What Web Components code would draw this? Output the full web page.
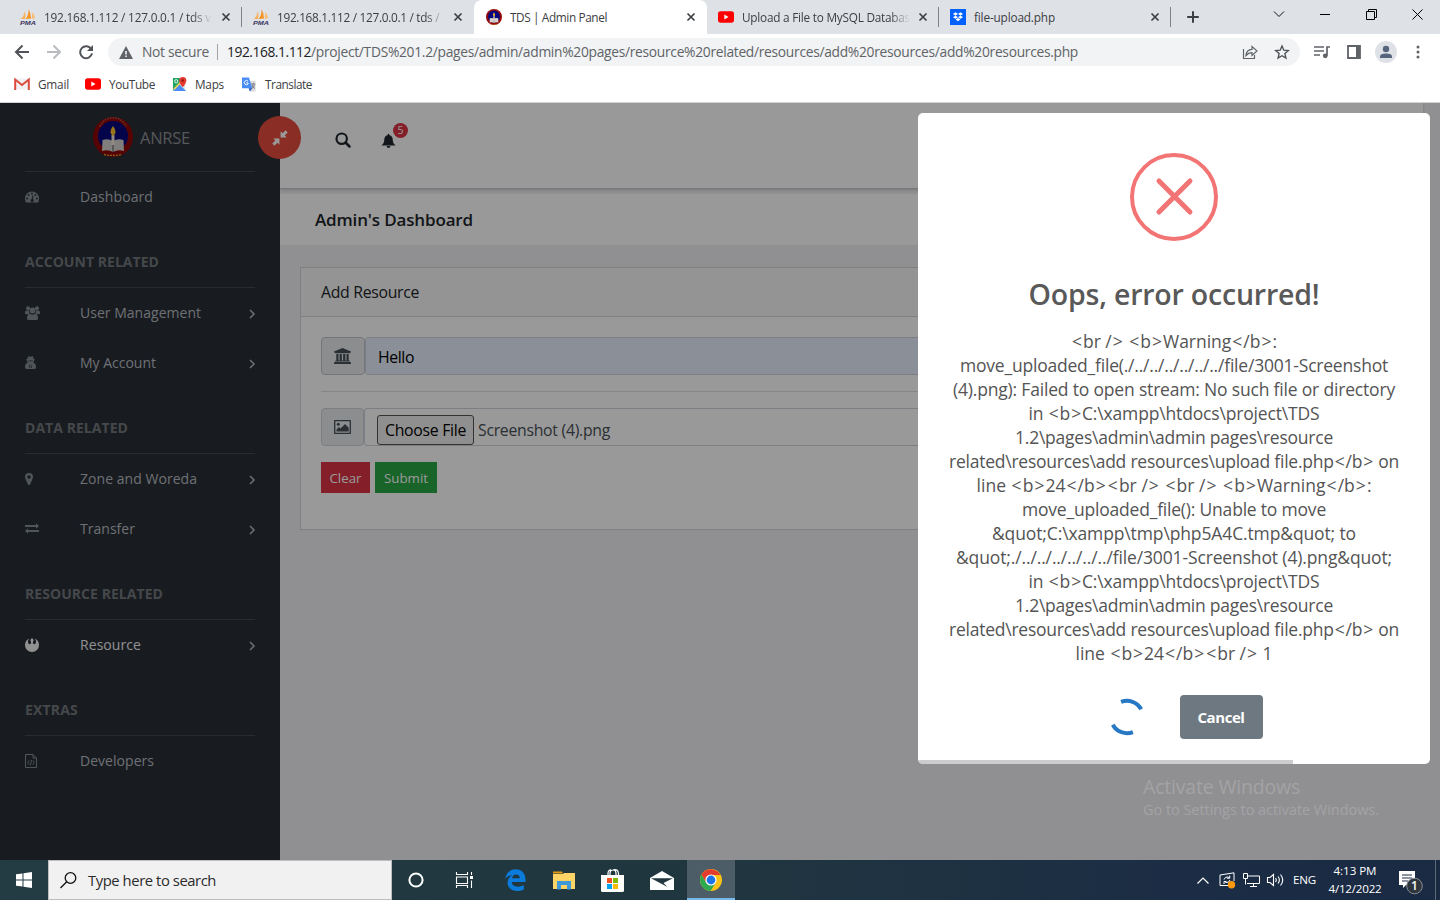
<!DOCTYPE html>
<html lang="en">
<head>
<meta charset="utf-8">
<title>TDS | Admin Panel</title>
<style>
html,body{margin:0;height:100%;overflow:hidden}
body{font-family:"Open Sans","Noto Sans",sans-serif;color:#000}
</style>
</head>
<body>
<desktop-screen></desktop-screen>
<script>
const ICONS = {
  pma:['0 0 16 16','<path d="M1 10Q4 7 5 2Q6 6 5 10Z" fill="#f9b25c"/><path d="M5.500 10Q9 6 8.500 0Q11 4 11 9.500Z" fill="#f79320"/><path d="M11.500 9.500Q13 6 12 3Q15 6 15 9.500Z" fill="#fbb96a"/><text x="0" y="15.500" font-family="Liberation Sans" font-size="6" font-weight="700" font-style="italic" textLength="16" lengthAdjust="spacingAndGlyphs" fill="#3b3560">PMA</text>'],
  crest:['0 0 40 40','<circle cx="20" cy="20" r="20" fill="#8f0508"/><circle cx="20" cy="19" r="15" fill="#07077d"/><path d="M7 14A14 14 0 0 1 33 14" fill="none" stroke="#d0a080" stroke-width="1.600" stroke-dasharray="1.500 1.200" opacity=".55" transform="translate(0 -4.500)"/><path d="M9.500 23Q15 21 20 24Q25 21 30.500 23L31 34Q25 32 20 35Q15 32 9 34Z" fill="#d6d2cf"/><path d="M20 25V35" stroke="#555" stroke-width="1"/><path d="M18.500 18h3v10h-3z" fill="#f2e7d9"/><path d="M20 9q5 6.500 0 10q-5-3.500 0-10Z" fill="#ffc52a"/><path d="M11 37.500q9 2 18 0" stroke="#d3a92a" stroke-width="1.300" stroke-dasharray="2 1" fill="none"/>'],
  youtube:['0 0 16 12','<rect width="16" height="11.500" y=".2" rx="2.600" fill="#f00"/><path d="M6.300 3.500v5l4.200-2.500z" fill="#fff"/>'],
  dropbox:['0 0 16 16','<path d="M0 0h16v16H0z" fill="#0061fe"/><path d="M5.500 3.200 8 4.900 5.500 6.500 3 4.900zM10.500 3.200 13 4.900l-2.500 1.600L8 4.900zM5.500 6.500 8 8.200 5.500 9.800 3 8.200zM10.500 6.500 13 8.200l-2.500 1.600L8 8.200zM8 9l2.400 1.600L8 12.300l-2.400-1.700z" fill="#fff"/>'],
  x:['0 0 10 10','<path d="M1.500 1.500l7 7M8.500 1.500l-7 7" stroke="#3c4043" stroke-width="1.700"/>'],
  plus:['0 0 12 12','<path d="M6 .2v11.600M.2 6h11.600" stroke="#3c4043" stroke-width="2"/>'],
  chev:['0 0 12 8','<path d="M1 1.500l5 5 5-5" fill="none" stroke="#111" stroke-width="1"/>'],
  min:['0 0 10 10','<path d="M0 5.500h10" stroke="#000"/>'],
  restore:['0 0 11 11','<path d="M2.500 2.500v-2h8v8h-2M.5 2.500h8v8h-8z" fill="none" stroke="#000"/>'],
  close:['0 0 11 11','<path d="M.5.500l10 10M10.500.500l-10 10" stroke="#000"/>'],
  back:['0 0 16 16','<path d="M15 8H2M8.500 1.500 2 8l6.500 6.500" fill="none" stroke="#505357" stroke-width="2"/>'],
  fwd:['0 0 16 16','<path d="M1 8h13M7.500 1.500 14 8l-6.500 6.500" fill="none" stroke="#b9bbbe" stroke-width="2"/>'],
  reload:['0 0 16 16','<path d="M13.300 5.200A6 6 0 1 0 14 9.400" fill="none" stroke="#505357" stroke-width="2"/><path d="M15 1v6H9z" fill="#505357"/>'],
  warn:['0 0 14 13','<path d="M7 0l7 13H0z" fill="#5f6368"/><path d="M6.200 5h1.600v3.500H6.200zM6.200 9.500h1.600v1.600H6.200z" fill="#f1f3f4"/>'],
  share:['0 0 16 16','<path d="M1.500 5v9.500h11V11" fill="none" stroke="#5f6368" stroke-width="1.200"/><path d="M4 11.500Q4.500 5.500 10 5.300V2.500l5 4.500-5 4.500V8.600Q6.500 8.500 4 11.500Z" fill="none" stroke="#5f6368" stroke-width="1.200"/>'],
  star:['0 0 16 16','<path d="M8 2l1.800 4.200 4.500.4-3.400 3 1 4.400L8 11.700 4.100 14l1-4.400-3.400-3 4.500-.4z" fill="none" stroke="#505357" stroke-width="1.400"/>'],
  queue:['0 0 16 14','<path d="M0 2h10M0 6h10M0 10h6" stroke="#5f6368" stroke-width="1.700"/><path d="M13 10.500V2h3" fill="none" stroke="#5f6368" stroke-width="1.700"/><circle cx="11.300" cy="10.800" r="2.400" fill="#5f6368"/>'],
  panel:['0 0 14 14','<path d="M1 1h12v12H1z" fill="#fff" stroke="#5f6368" stroke-width="1.800"/><path d="M9 1h4v12H9z" fill="#5f6368"/>'],
  person:['0 0 22 22','<circle cx="11" cy="11" r="11" fill="#dee1e6"/><circle cx="11" cy="8" r="3.200" fill="#56647c"/><path d="M5 17v-1.500Q5 12.500 11 12.500t6 3V17z" fill="#56647c"/>'],
  dots:['0 0 4 14','<circle cx="2" cy="2" r="1.500" fill="#5f6368"/><circle cx="2" cy="7" r="1.500" fill="#5f6368"/><circle cx="2" cy="12" r="1.500" fill="#5f6368"/>'],
  gmail:['0 0 16 12','<path d="M1 .5h14v11H1z" fill="#f1f1f1"/><path d="M1.200 12V1.500L8 7l6.800-5.500V12" fill="none" stroke="#dc4a3d" stroke-width="2"/>'],
  maps:['0 0 16 16','<rect x="1" y="1" width="13" height="14" rx="1.500" fill="#e8e8e8"/><path d="M1 1h9v6L1 14z" fill="#23a566"/><path d="M1 15 8 8l7 7z" fill="#4a8cf5"/><path d="M2 13 9 6" stroke="#f8d054" stroke-width="1.600"/><circle cx="4.500" cy="4.500" r="1.700" fill="none" stroke="#fff" stroke-width=".9"/><path d="M11.500 0a3.800 3.800 0 0 1 3.800 3.900Q15 6.500 11.500 11 8 6.500 7.700 3.900A3.800 3.800 0 0 1 11.500 0Z" fill="#e5392f"/><circle cx="11.500" cy="3.700" r="1.300" fill="#8c1911"/>'],
  translate:['0 0 16 16','<path d="M6 4h9v11.500H9z" fill="#dadada"/><path d="M.5.500H8L11.500 12H.500z" fill="#4a8cf5"/><path d="M7.500 12h4L9 15.500z" fill="#2b59c0"/><path d="M7 4.500A2.300 2.300 0 1 0 7 7.500V6.300H5" fill="none" stroke="#fff"/><path d="M10.500 7.500h4M12.500 6.500v1M14 8q-.7 3-3 4.200M11.200 8.500q1 2.500 3 3.700" fill="none" stroke="#5f6368" stroke-width=".9"/>'],
  compress:['0 0 16 16','<path d="M8.600 1.200 10.600 3.200 13.600.3 15.700 2.400 12.700 5.400 14.700 7.400H8.600zM7.400 14.800 5.400 12.800 2.400 15.700.3 13.600l3-3L1.300 8.600H7.400z" fill="#fff"/>'],
  search:['0 0 16 16','<circle cx="6.700" cy="6.700" r="5.200" fill="none" stroke="#20272e" stroke-width="2.200"/><path d="M10.500 10.500l4 4" stroke="#20272e" stroke-width="2.500" stroke-linecap="round"/>'],
  bell:['0 0 16 16','<path d="M8 .3q.9 0 .9 1.200Q12.500 2.500 12.500 6.500q0 4.200 3 6.300H.500q3-2.100 3-6.300Q3.500 2.500 7.100 1.500 7.100.300 8 .3zM6 13.300h4q-.2 2.200-2 2.200t-2-2.200z" fill="#20272e"/>'],
  dash:['0 0 14 12','<path d="M7 .5a7 7 0 0 1 7 7q0 2-1 4H1q-1-2-1-4a7 7 0 0 1 7-7z" fill="#868e95"/><g fill="#2a2f36"><circle cx="2.200" cy="7.500" r=".9"/><circle cx="3.600" cy="4" r=".9"/><circle cx="7" cy="2.500" r=".9"/><circle cx="10.400" cy="4" r=".9"/><circle cx="11.800" cy="7.500" r=".9"/><path d="M7.600 4.200 8.500 4.400 7.900 8a1.600 1.600 0 1 1-1.200-.1z"/></g>'],
  users:['0 0 15 14','<g fill="#868e95"><circle cx="3" cy="2.300" r="2"/><circle cx="12" cy="2.300" r="2"/><circle cx="7.500" cy="4.500" r="2.900"/><path d="M0 8V6.500Q0 4.500 1.500 4.500H4Q4 7 5 7.500 3.500 7.500 3 8.300zM15 8V6.500q0-2-1.500-2H11Q11 7 10 7.500q1.500 0 2 .8zM2 12.500Q2 7.700 5 7.700q1.200 1 2.500 1T10 7.700q3 0 3 4.800Q13 14 11.500 14h-8Q2 14 2 12.500z"/></g>'],
  secret:['0 0 11 13','<path d="M2.300 3 3.100.2 5.500.7 7.900.2l.8 2.800 1.500.7-1.200.8Q9 6 8.200 6.800 11 7.500 11 11q0 2-1.500 2h-8Q0 13 0 11q0-3.500 2.800-4.200Q2 6 2 4.500L.8 3.700z" fill="#868e95"/><path d="M4.200 8.500 4.900 12M6.800 8.500 6.100 12M3.200 4.900h4.600" stroke="#2a2f36" stroke-width=".7"/>'],
  pin:['0 0 8 12','<path d="M4 0a4 4 0 0 1 4 4Q8 5.500 5 11.400q-1 1-2 0Q0 5.500 0 4a4 4 0 0 1 4-4zm0 2.200A1.800 1.800 0 1 0 4 5.800 1.800 1.800 0 0 0 4 2.200z" fill="#868e95"/>'],
  swap:['0 0 14 11','<path d="M0 2h11V.2L14 3l-3 2.700V4H0zM14 9H3v1.800L0 8l3-2.700V7h11z" fill="#868e95"/>'],
  rebel:['0 0 14 14','<path d="M4 .8Q2.300 3 3.200 5 4.300 7 5.900 5.800L6 3 5 2.200 7 0 9 2.200 8 3l.1 2.800Q9.700 7 10.800 5 11.700 3 10 .8 14 2.500 14 7A7 7 0 0 1 0 7Q0 2.500 4 .8z" fill="#f1f1f1"/>'],
  code:['0 0 12 14','<path d="M.5.500h7.500l3.500 3.500v9.500H.5zM8 .5V4h3.500" fill="none" stroke="#868e95"/><path d="M4.200 6.300 2.700 8.500l1.500 2.200M7.800 6.300l1.500 2.200-1.500 2.200M6.600 6 5.400 11" fill="none" stroke="#868e95" stroke-width=".9"/>'],
  right:['0 0 6 10','<path d="M1 1l4 4-4 4" fill="none" stroke="#b4b8bc" stroke-width="1.600"/>'],
  bank:['0 0 17 16','<path d="M8.500 0 17 3.500V4.600H15.900V5.200H1.100V4.600H0V3.500zM2.300 6h2.200v6.500h1.100V6h2.300v6.500H9.100V6h2.300v6.500h1.100V6h2.200v6.500h1v1H1.300v-1h1zM.6 14h15.800v.6H17V16H0V14.600h.6z" fill="#495057"/>'],
  image:['0 0 17 14','<path d="M.7.700h15.600v12.600H.7z" fill="none" stroke="#495057" stroke-width="1.300" stroke-linejoin="round"/><circle cx="4.300" cy="4.200" r="1.500" fill="#495057"/><path d="M2.500 11.500V9.500L5 7l1.500 1.500L11 4l3.700 3.700v3.800z" fill="#495057"/>'],
  error:['0 0 88 88','<circle cx="44" cy="44" r="42" fill="none" stroke="#f27474" stroke-width="4"/><path d="M29 28 60 59M60 28 29 59" stroke="#f27474" stroke-width="5" stroke-linecap="round"/>'],
  loader:['0 0 36 36','<path d="M12.100 2.900A16.200 16.200 0 0 1 32.200 10.300M23.900 33.100A16.200 16.200 0 0 1 3.800 25.700" fill="none" stroke="#2778c4" stroke-width="4"/>'],
  win:['0 0 16 16','<path d="M0 2.300 6.500 1.400V7.500H0zM7.500 1.300 16 0v7.500H7.500zM0 8.500h6.500v6.100L0 13.700zM7.500 8.500H16V16L7.500 14.700z" fill="#fff"/>'],
  find:['0 0 17 17','<circle cx="10.500" cy="6" r="5.300" fill="none" stroke="#111" stroke-width="1.300"/><path d="M6.700 9.700.5 16" stroke="#111" stroke-width="1.300"/>'],
  cortana:['0 0 16 16','<circle cx="8" cy="8" r="6.600" fill="none" stroke="#fff" stroke-width="2"/>'],
  task:['0 0 17 16','<path d="M.5 0v2.500h11V0M.5 5h11v6.500H.500zM.5 16v-2.500h11V16M15.500 0v3M15.500 8.500V16" fill="none" stroke="#fff" stroke-width="1.100"/><path d="M14 4h3v3h-3z" fill="#fff"/>'],
  edge:['0 0 21 22','<path d="M.3 10.200C1.200 3.500 5.500.2 10.700.2 17 .2 20.500 4.800 20.500 10.600v2.500H6.800c.1 3 2.600 4.600 6 4.600 2.300 0 4.200-.6 6-1.700v4.400c-2 1-4.200 1.500-6.800 1.500C6.300 21.900 2.600 18.500 2.600 13.700c0-3.100 1.700-5.900 4.500-7.400C4.300 6.300 2 7.500.3 10.200zM7 9.300h7.800c0-2.500-1.400-3.900-3.600-3.900S7.400 6.900 7 9.300z" fill="#0b7bdc"/>'],
  folder:['0 0 22 19','<path d="M0 .5h9l1 2H0z" fill="#e09b12"/><path d="M0 3h10l1-1h11v16H0z" fill="#ffd466"/><path d="M4 10h14v8.500h-4V14H8v4.500H4z" fill="#3f99d8"/>'],
  store:['0 0 23 23','<path d="M7 7V4.500q0-3.500 3-3.700M9 7V4q.2-3 3-3t3 3v3M12 1q5-1.500 5.500 3.500V7" fill="none" stroke="#fff" stroke-width="1.200"/><path d="M0 6h23v15.500Q23 23 21.500 23h-20Q0 23 0 21.500z" fill="#fff"/><path d="M6 9h5v5H6z" fill="#f25022"/><path d="M12 9h5v5h-5z" fill="#7fba00"/><path d="M6 15h5v5H6z" fill="#00a4ef"/><path d="M12 15h5v5h-5z" fill="#ffb900"/>'],
  mail:['0 0 24 19','<path d="M0 7 12 0l12 7v12H0z" fill="#fff"/><path d="M1 7.300H23L13.500 12 17.500 16z" fill="#21363f"/>'],
  chrome:['0 0 22 22','<circle cx="11" cy="11" r="11" fill="#fbc116"/><path d="M1.500 5.500A11 11 0 0 0 10.500 22L15.800 13.700 11 11 6.200 13.700z" fill="#2da94f"/><path d="M1.500 5.500 6.500 14 11 11V6h9.500A11 11 0 0 0 1.500 5.500z" fill="#e33b2e"/><circle cx="11" cy="11" r="5.600" fill="#fff"/><circle cx="11" cy="11" r="4.400" fill="#1a73e8"/>'],
  up:['0 0 12 7','<path d="M.5 6.500l5.500-5.500 5.500 5.500" fill="none" stroke="#fff" stroke-width="1.200"/>'],
  sync:['0 0 17 17','<path d="M1 3 15 .8V9M10 13.500H1V3" fill="none" stroke="#fff"/><path d="M5 7.500q1-3 4-2.500l1.500 1M10.700 3.500V6.200H8M11 8q-1 3-4 2.500L5.500 9.500M5 12V9.500h2.500" fill="none" stroke="#fff"/><circle cx="12.500" cy="12.700" r="3.700" fill="#ff9a0f"/>'],
  net:['0 0 17 14','<path d="M4.500 3h12v7.500H4M7 13.500h7M10.500 10.500v3M.5.500h4v5h-4zM2.500 5.500v6" fill="none" stroke="#fff"/>'],
  sound:['0 0 17 14','<path d="M.5 4.500h2.500L6.500 1.500v11L3 9.500H.5zM8.500 5q1.500 2 0 4M11 3.500q2.800 3.500 0 7M13.500 1.500q4.500 5.500 0 11" fill="none" stroke="#fff" stroke-width="1.100"/>'],
  note:['0 0 24 23','<path d="M0 0h16v14H7l-3 3v-3H0z" fill="#fff"/><path d="M3 4h10M3 7h10M3 10h6" stroke="#1b2c45"/><circle cx="15.500" cy="15" r="7.800" fill="#2f353d" stroke="#878d95" stroke-width="1"/>']
};

class Base extends HTMLElement {
  constructor(){ super(); this.attachShadow({mode:'open'}); }
  connectedCallback(){
    if(this.shadowRoot.childNodes.length) return;
    const t=document.createElement('template');
    t.innerHTML='<style>'+this.css()+'</style>'+this.html();
    this.shadowRoot.append(t.content.cloneNode(true));
  }
  a(n,d=''){ return this.getAttribute(n) ?? d; }
  css(){ return ''; }
  html(){ return '<slot></slot>'; }
}
const def=(n,css,html)=>customElements.define(n,class extends Base{
  css(){return typeof css==='function'?css(this):css}
  html(){return typeof html==='function'?html(this):(html??'<slot></slot>')}
});

def('ui-icon', e=>`:host{display:block;flex:none;width:${e.a('w')}px;height:${e.a('h')}px}svg{display:block;width:100%;height:100%;overflow:visible}`,
  e=>`<svg viewBox="${ICONS[e.a('name')][0]}">${ICONS[e.a('name')][1]}</svg>`);

def('browser-tab', e=>`:host{display:flex;flex:none;box-sizing:border-box;width:${e.a('w')}px;height:34px;align-items:center;padding:0 11px 0 11px;gap:8px;font-size:11.800px;color:#3c4043;position:relative}
:host([active]){background:#fff;border-radius:8px 8px 0 0;padding-left:12px}
:host([sep])::after{content:"";position:absolute;right:0;top:7px;width:1px;height:20px;background:#808387}
.t{flex:1;min-width:0;overflow:hidden;white-space:nowrap;padding-bottom:1px}
:host([fade]) .t{-webkit-mask-image:linear-gradient(90deg,#000 148px,transparent 168px)}`,
  e=>`<ui-icon name="${e.a('icon')}" w="16" h="${e.a('ih','16')}"></ui-icon><div class="t"><fit-text w="${e.a('tw')}">${e.a('label')}</fit-text></div><ui-icon name="x" w="10" h="10"></ui-icon>`);

def('browser-chrome', `:host{display:flex;flex-direction:column;height:103px;box-sizing:border-box;background:#fff;border-bottom:1px solid #d0d2d5}
.tabs{display:flex;height:34px;background:#dee1e6;padding-left:9px;align-items:center}
.tabs>.new{margin-left:16px}
.ctl{margin-left:auto;display:grid;grid-template-columns:repeat(4,46px);justify-items:center;align-items:center;height:28px;margin-bottom:6px}
.bar{display:flex;align-items:center;height:36px;padding:0 20px 0 14px}
.nav{display:flex;gap:16px;width:94px}
.omni{display:flex;align-items:center;width:1192px;height:28px;border-radius:14px;background:#f1f3f4;box-sizing:border-box;padding:0 10px 0 11px;font-size:13.800px;color:#5f6368}
.omni fit-text{margin-bottom:2px}
.omni fit-text:first-of-type{margin-left:9px}
.v{width:1px;height:16px;background:#9fa2a5;margin:0 9px 0 8px}
.url{color:#202124}.path{color:#5f6368}
.sp{flex:1}
.end{display:flex;align-items:center;flex:1;justify-content:space-between;margin:0 0 0 14px}
.marks{display:flex;align-items:center;height:28px;padding-left:14px;font-size:11.800px;color:#3c4043}
.marks ui-icon{margin-right:8px}
.marks fit-text{margin-bottom:1px}`,
`<div class="tabs">
<browser-tab w="233" sep fade icon="pma" tw="167" label="192.168.1.112 / 127.0.0.1 / tds v"></browser-tab>
<browser-tab w="232" fade icon="pma" tw="165" label="192.168.1.112 / 127.0.0.1 / tds / "></browser-tab>
<browser-tab w="233" active icon="crest" tw="97" label="TDS | Admin Panel"></browser-tab>
<browser-tab w="232" sep fade icon="youtube" ih="12" tw="168" label="Upload a File to MySQL Databas"></browser-tab>
<browser-tab w="232" sep icon="dropbox" tw="81" label="file-upload.php"></browser-tab>
<ui-icon class="new" name="plus" w="12" h="12"></ui-icon>
<div class="ctl"><ui-icon name="chev" w="12" h="8"></ui-icon><ui-icon name="min" w="10" h="10"></ui-icon><ui-icon name="restore" w="11" h="11"></ui-icon><ui-icon name="close" w="11" h="11"></ui-icon></div>
</div>
<div class="bar"><div class="nav"><ui-icon name="back" w="16" h="16"></ui-icon><ui-icon name="fwd" w="16" h="16"></ui-icon><ui-icon name="reload" w="16" h="16"></ui-icon></div>
<div class="omni"><ui-icon name="warn" w="14" h="13"></ui-icon><fit-text w="67">Not secure</fit-text><span class="v"></span><fit-text class="url" w="84">192.168.1.112</fit-text><fit-text class="path" w="767">/project/TDS%201.2/pages/admin/admin%20pages/resource%20related/resources/add%20resources/add%20resources.php</fit-text><span class="sp"></span><ui-icon name="share" w="16" h="16" style="margin-right:16px"></ui-icon><ui-icon name="star" w="16" h="16"></ui-icon></div>
<div class="end"><ui-icon name="queue" w="16" h="14"></ui-icon><ui-icon name="panel" w="14" h="14"></ui-icon><ui-icon name="person" w="22" h="22" style="margin:0 2px 0 -3px"></ui-icon><ui-icon name="dots" w="4" h="14"></ui-icon></div></div>
<div class="marks"><ui-icon name="gmail" w="16" h="12"></ui-icon><fit-text w="31" style="margin-right:16px">Gmail</fit-text><ui-icon name="youtube" w="16" h="12"></ui-icon><fit-text w="46" style="margin-right:17px">YouTube</fit-text><ui-icon name="maps" w="15" h="15"></ui-icon><fit-text w="29" style="margin-right:17px">Maps</fit-text><ui-icon name="translate" w="16" h="15"></ui-icon><fit-text w="47">Translate</fit-text></div>`);

def('nav-heading', `:host{display:flex;box-sizing:border-box;align-items:center;height:51px;padding-bottom:2px;margin-top:15px;border-bottom:1px solid #45494f;font-size:14px;font-weight:700;color:#74787d}`,
  e=>`<fit-text w="${e.a('w')}">${e.a('label')}</fit-text>`);
def('nav-item', `:host{display:flex;box-sizing:border-box;align-items:center;height:50px;padding-bottom:2px;font-size:14px;color:#b8bcc1}:host([active]){color:#eee}.i{width:55px;padding-top:1px}ui-icon.r{margin-left:auto;margin-top:3px}`,
  e=>`<div class="i"><ui-icon name="${e.a('icon')}" w="${e.a('iw')}" h="${e.a('ih')}"></ui-icon></div><fit-text w="${e.a('w')}">${e.a('label')}</fit-text>${e.hasAttribute('leaf')?'':'<ui-icon class="r" name="right" w="6" h="10"></ui-icon>'}`);

def('side-bar', `:host{display:block;box-sizing:border-box;width:280px;height:757px;background:#292e36;padding:0 25px;position:relative}
.brand{display:flex;align-items:center;height:68px;border-bottom:1px solid #45494f;padding-left:68px;gap:7px;font-size:16.500px;color:#8f9296}
.toggle{position:absolute;left:258px;top:13px;width:43px;height:43px;border-radius:50%;background:#e74c3c;display:grid;place-items:center;z-index:2}`,
`<div class="brand"><ui-icon name="crest" w="40" h="40"></ui-icon><fit-text w="50">ANRSE</fit-text></div>
<div class="toggle"><ui-icon name="compress" w="16" h="16"></ui-icon></div>
<nav-item leaf icon="dash" iw="14" ih="12" label="Dashboard" w="73"></nav-item>
<nav-heading label="ACCOUNT RELATED" w="134"></nav-heading>
<nav-item icon="users" iw="15" ih="14" label="User Management" w="121"></nav-item>
<nav-item icon="secret" iw="11" ih="13" label="My Account" w="76"></nav-item>
<nav-heading label="DATA RELATED" w="103"></nav-heading>
<nav-item icon="pin" iw="8" ih="12" label="Zone and Woreda" w="117"></nav-item>
<nav-item icon="swap" iw="14" ih="11" label="Transfer" w="55"></nav-item>
<nav-heading label="RESOURCE RELATED" w="138"></nav-heading>
<nav-item active icon="rebel" iw="14" ih="14" label="Resource" w="61"></nav-item>
<nav-heading label="EXTRAS" w="53"></nav-heading>
<nav-item leaf icon="code" iw="12" ih="14" label="Developers" w="74"></nav-item>`);

def('input-group', `:host{display:flex;height:38px;font-size:15.800px;color:#000}
.pre{box-sizing:border-box;width:44px;border:1px solid #ced4da;border-radius:4px;background:#e9ecef;display:grid;place-items:center;padding-right:1px}
:host([fill]) .pre{border-color:#c2c5cb}
:host([file]) .pre{width:43px;padding:0}
.in{box-sizing:border-box;flex:1;border:1px solid #ced4da;background:#fff;display:flex;align-items:center;padding:2px 12px 0;border-radius:3px;color:#495057}
:host([fill]) .in{background:#e8f0fe;color:#000}
:host([file]) .in{padding-top:6px}`,
 e=>`<div class="pre"><ui-icon name="${e.a('icon')}" w="17" h="${e.a('ih')}"></ui-icon></div><div class="in"><slot></slot></div>`);

def('main-pane', `:host{display:flex;flex-direction:column;flex:1;height:757px;background:#f0f0f3}
.top{display:flex;height:86px;background:#fff;border-bottom:1px solid #c8c8cd;margin-right:17px;box-shadow:0 1px 3px rgba(60,60,80,.22);padding-left:55px;box-sizing:border-box;align-items:flex-start}
.top>ui-icon{margin:29px 30px 0 0}
.bell{position:relative;margin:30px 0 0}
.badge{position:absolute;left:12px;top:-10px;width:15px;height:15px;border-radius:50%;background:#dc3545;color:#fff;font-size:10.500px;line-height:15px;text-align:center}
.title{display:flex;align-items:center;height:51px;margin:5px 17px 0 0;background:#fff;padding-left:35px;font-size:17px;font-weight:600;color:#212529}
.card{margin:22px 37px 0 20px;box-sizing:border-box;height:263px;background:#fff;border:1px solid #d6d6d8}
.head{display:flex;align-items:center;height:48px;border-bottom:1px solid #d6d6d8;background:#f7f7f7;padding-left:20px;font-size:15.800px;color:#212529}
.body{padding:20px}
hr{margin:16px 0;border:0;border-top:1px solid #e0e0e0}
.file{box-sizing:border-box;width:97px;height:30px;border:1px solid #555;border-radius:3px;background:#efefef;color:#000;display:grid;place-items:center;margin-right:4px}
.btns{display:flex;gap:5px;margin-top:16px;font-size:13.300px;color:#fff}
.btns div{display:grid;place-items:center;height:31px;width:49px;background:#dc3545}
.btns .ok{width:62px;background:#28a745}`,
`<div class="top"><ui-icon name="search" w="16" h="16"></ui-icon><div class="bell"><ui-icon name="bell" w="15" h="16"></ui-icon><span class="badge">5</span></div></div>
<div class="title"><fit-text w="158">Admin's Dashboard</fit-text></div>
<div class="card"><div class="head"><fit-text w="98">Add Resource</fit-text></div>
<div class="body"><input-group fill icon="bank" ih="16"><fit-text w="36">Hello</fit-text></input-group><hr>
<input-group file icon="image" ih="14"><div class="file"><fit-text w="81">Choose File</fit-text></div><fit-text w="132">Screenshot (4).png</fit-text></input-group>
<div class="btns"><div><fit-text w="32">Clear</fit-text></div><div class="ok"><fit-text w="44">Submit</fit-text></div></div></div></div>`);

const esc=s=>s.replace(/&/g,'&amp;').replace(/</g,'&lt;').replace(/>/g,'&gt;').replace(/&[lg]t;/g,'<i>$&</i>');
const LINES=[['<br /> <b>Warning</b>:',206],['move_uploaded_file(./../../../../../../file/3001-Screenshot',428],['(4).png): Failed to open stream: No such file or directory',442],['in <b>C:\\xampp\\htdocs\\project\\TDS',291],['1.2\\pages\\admin\\admin pages\\resource',318],['related\\resources\\add resources\\upload file.php</b> on',450],['line <b>24</b><br /> <br /> <b>Warning</b>:',395],['move_uploaded_file(): Unable to move',304],['&quot;C:\\xampp\\tmp\\php5A4C.tmp&quot; to',364],['&quot;./../../../../../../file/3001-Screenshot (4).png&quot;',436],['in <b>C:\\xampp\\htdocs\\project\\TDS',291],['1.2\\pages\\admin\\admin pages\\resource',318],['related\\resources\\add resources\\upload file.php</b> on',450],['line <b>24</b><br /> 1',197]];
def('error-dialog', `:host{position:absolute;right:10px;top:10px;width:512px;height:651px;background:#fff;border-radius:5px;overflow:hidden;display:flex;flex-direction:column;align-items:center;color:#545454}
ui-icon.e{margin-top:40px}
h2{margin:33px 0 0;font-size:28.500px;line-height:40px;font-weight:600;color:#595959}
.msg{display:flex;flex-direction:column;align-items:center;margin-top:15px;font-size:17.500px;line-height:24px}
i{font-style:normal;margin:0 1px}
.act{display:flex;align-items:center;gap:35px;margin-top:30px;margin-left:23px}
.cancel{width:83px;height:44px;border-radius:4px;background:#6e7881;color:#fff;font-weight:700;font-size:15px;display:grid;place-items:center}
.progress{align-self:flex-start;margin-top:auto;width:375px;height:4px;background:#ccc}`,
`<ui-icon class="e" name="error" w="88" h="88"></ui-icon><h2><fit-text w="291">Oops, error occurred!</fit-text></h2>
<div class="msg">${LINES.map(l=>`<fit-text w="${l[1]}">${esc(l[0])}</fit-text>`).join('')}</div>
<div class="act"><ui-icon name="loader" w="36" h="36"></ui-icon><div class="cancel"><fit-text w="47">Cancel</fit-text></div></div><div class="progress"></div>`);

def('task-bar', `:host{display:flex;height:40px;background:linear-gradient(90deg,#233b42 0,#20363f 50%,#1b2c45 85%,#1b2a43);color:#fff;align-items:center}
.start,.app{display:grid;place-items:center;width:48px;height:40px;flex:none}
.s{display:flex;align-items:center;box-sizing:border-box;width:344px;height:40px;background:#f1f1f1;border:1px solid #bcbebf;padding-left:11px;gap:11px;font-size:14.800px;color:#2b2b2b}
.on{background:#4d5d67;box-shadow:inset 0 -2px #76b9ed}
.tray{margin-left:auto;display:flex;align-items:center;font-size:11.600px;line-height:18px;gap:7px}
.clock{display:flex;flex-direction:column;align-items:center;width:54px;margin-left:5px}
.n{position:relative;margin-left:10px;margin-top:4px}
.n b{position:absolute;left:8px;top:6px;width:15px;text-align:center;font-size:12px;font-weight:600}
.edge{width:1px;height:40px;background:#5d6878;margin-left:5px;margin-right:4px}`,
`<div class="start"><ui-icon name="win" w="16" h="16"></ui-icon></div>
<div class="s"><ui-icon name="find" w="17" h="17"></ui-icon><fit-text w="128">Type here to search</fit-text></div>
<div class="app"><ui-icon name="cortana" w="16" h="16"></ui-icon></div><div class="app"><ui-icon name="task" w="17" h="16"></ui-icon></div>
<div class="app" style="margin-left:3px"><ui-icon name="edge" w="21" h="22"></ui-icon></div><div class="app" style="margin-left:1px"><ui-icon name="folder" w="22" h="19"></ui-icon></div><div class="app"><ui-icon name="store" w="23" h="23"></ui-icon></div><div class="app" style="margin-left:2px"><ui-icon name="mail" w="24" h="19"></ui-icon></div><div class="app on" style="margin-left:1px"><ui-icon name="chrome" w="22" h="22"></ui-icon></div>
<div class="tray"><ui-icon name="up" w="12" h="7" style="margin-right:3px"></ui-icon><ui-icon name="sync" w="17" h="17"></ui-icon><ui-icon name="net" w="17" h="14"></ui-icon><ui-icon name="sound" w="17" h="14" style="margin-right:2px"></ui-icon><fit-text w="23">ENG</fit-text><div class="clock"><fit-text w="43">4:13 PM</fit-text><fit-text w="53">4/12/2022</fit-text></div><div class="n"><ui-icon name="note" w="24" h="23"></ui-icon><b>1</b></div><div class="edge"></div></div>`);

def('web-page', `:host{display:flex;height:757px;position:relative;overflow:hidden}
.shade{position:absolute;inset:0;background:rgba(0,0,0,.4);z-index:3}
error-dialog{z-index:4}
.mark{position:absolute;left:1143px;top:671px;z-index:4;color:#a3a3a5;display:flex;flex-direction:column}
.mark .a{font-size:19.500px;line-height:26px}.mark .b{font-size:14.500px;line-height:19px}`,
`<side-bar></side-bar><main-pane></main-pane><div class="shade"></div><error-dialog></error-dialog>
<div class="mark"><fit-text class="a" w="157">Activate Windows</fit-text><fit-text class="b" w="236">Go to Settings to activate Windows.</fit-text></div>`);

def('desktop-screen', `:host{display:flex;flex-direction:column;width:1440px;height:900px}`,
`<browser-chrome></browser-chrome><web-page></web-page><task-bar></task-bar>`);

/* Text run that tracks its letters so that it spans the given width. */
customElements.define('fit-text', class extends Base{
  css(){return ':host{display:inline-block;flex:none;white-space:pre;vertical-align:top}span{display:inline-block}'}
  html(){return '<span><slot></slot></span>'}
  connectedCallback(){
    super.connectedCallback();
    const w=+this.a('w'), s=this.shadowRoot.querySelector('span');
    const n=this.textContent.length, nat=s.getBoundingClientRect().width;
    s.style.letterSpacing=((w-nat)/n).toFixed(3)+'px';
    this.style.width=w+'px';
  }
});
</script>
</body>
</html>
